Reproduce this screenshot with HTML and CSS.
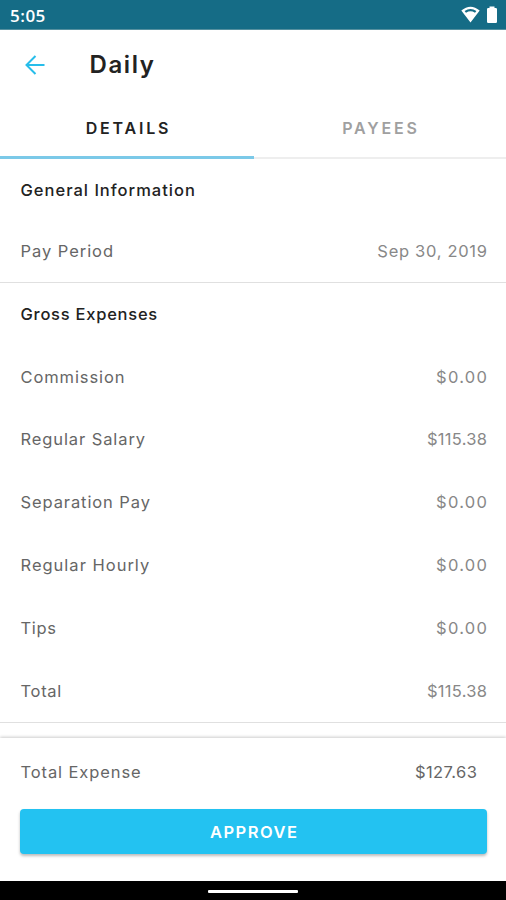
FILE: index.html
```html
<!DOCTYPE html>
<html lang="en">
<head>
<meta charset="utf-8">
<title>Daily</title>
<link rel="stylesheet" href="styles.css">
</head>
<body>
<div class="screen">
  <header class="status">
    <span class="clock">5:05</span>
    <svg class="status-icons" width="37" height="18" viewBox="0 0 37 18">
      <path fill="#fff" fill-rule="evenodd" d="M0.3 4.500Q9.500-3.200 18.700 4.500L9.500 16.500ZM3.600 5L5 6.700Q9.500 3.900 14 6.700L15.400 5Q9.500 1.100 3.600 5Z"/>
      <path fill="#fff" d="M28.500 0.500h5v1.500h1.300q1.200 0 1.200 1.200v12.600q0 1.200-1.200 1.200h-7.600q-1.200 0-1.200-1.200V3.200q0-1.200 1.200-1.200h1.300z"/>
    </svg>
  </header>
  <div class="appbar">
    <svg class="back" width="20" height="20" viewBox="0 0 20 20" fill="none" stroke="#27bdea" stroke-width="2"><path d="M19.500 10H1.800M10.500 1L1.500 10L10.500 19"/></svg>
    <h1 class="title">Daily</h1>
  </div>
  <nav class="tabs">
    <div class="tab active"><span class="t-details">DETAILS</span></div>
    <div class="tab"><span class="t-payees">PAYEES</span></div>
  </nav>
  <main class="content">
    <section class="group info">
      <h2 class="row"><span class="l-info">General Information</span></h2>
      <div class="row"><span class="l-period">Pay Period</span><span class="value v-date">Sep 30, 2019</span></div>
    </section>
    <section class="group gross">
      <h2 class="row"><span class="l-gross">Gross Expenses</span></h2>
      <div class="row"><span class="l-comm">Commission</span><span class="value v-zero">$0.00</span></div>
      <div class="row"><span class="l-salary">Regular Salary</span><span class="value v-115">$115.38</span></div>
      <div class="row"><span class="l-sep">Separation Pay</span><span class="value v-zero">$0.00</span></div>
      <div class="row"><span class="l-hourly">Regular Hourly</span><span class="value v-zero">$0.00</span></div>
      <div class="row"><span class="l-tips">Tips</span><span class="value v-zero">$0.00</span></div>
      <div class="row"><span class="l-total">Total</span><span class="value v-115">$115.38</span></div>
    </section>
  </main>
  <footer class="summary">
    <div class="sum-row"><span class="l-expense">Total Expense</span><span class="v-expense">$127.63</span></div>
    <button class="approve"><span class="l-approve">APPROVE</span></button>
  </footer>
  <div class="navbar"><div class="handle"></div></div>
</div>
</body>
</html>
```
FILE: styles.css
```css
* { box-sizing: border-box; }
body { margin: 0; font-family: Inter, "Liberation Sans", sans-serif; background: #fff; }
h1, h2 { margin: 0; }
span { white-space: nowrap; }
.screen { width: 506px; height: 900px; display: flex; flex-direction: column; overflow: hidden; background: #fff; }
.status { height: 30px; flex: none; background: #156c86; border-bottom: 1px solid #55909f; display: flex; justify-content: space-between; padding: 0 8px 0 10px; }
.clock { font: 600 17px/31px "Open Sans", sans-serif; color: #fff; letter-spacing: .5px; }
.status-icons { margin-top: 6px; }
.appbar { height: 69px; flex: none; display: flex; align-items: center; padding-left: 25px; }
.title { margin-left: 44.500px; font-size: 24px; line-height: 30px; font-weight: 600; color: #222; letter-spacing: 1.600px; }
.tabs { height: 60px; flex: none; display: flex; border-bottom: 2px solid #eee; }
.tab { width: 254px; height: 60px; padding-bottom: 2px; display: flex; justify-content: center; align-items: center; font-size: 16px; font-weight: 600; color: #a0a0a0; letter-spacing: 2.800px; }
.tab + .tab { width: 252px; }
.active { color: #222; border-bottom: 3px solid #7bc9e8; padding: 0 0 0 3px; }
.t-payees { padding-left: 2px; }
.content { flex: none; height: 579px; display: flex; flex-direction: column; }
.group { display: grid; border-bottom: 1px solid #e0e0e0; flex: none; }
.info { height: 124px; grid-template-rows: 61px 61px; }
.gross { height: 440px; padding-top: 0; grid-template-rows: repeat(7, 62.8px); }
.row { display: flex; align-items: center; justify-content: space-between; padding: 0 19px 0 20.500px; font-size: 16.500px; font-weight: 400; color: #666; }
h2.row { font-weight: 500; color: #222; }
.gross .row { padding-bottom: 1px; }
.gross h2.row { padding-bottom: 0; }
.value { color: #888; }
.l-info { letter-spacing: 1px; }
.l-period { letter-spacing: .95px; }
.l-gross { letter-spacing: .75px; }
.l-comm, .l-salary, .l-sep, .l-expense { letter-spacing: .9px; }
.l-hourly { letter-spacing: 1px; }
.l-tips, .l-total { letter-spacing: .7px; }
.v-date { letter-spacing: .7px; margin-right: -.7px; }
.v-zero { letter-spacing: 1.300px; margin-right: -1.300px; }
.v-115 { letter-spacing: .3px; margin-right: -.3px; }
.v-expense { letter-spacing: .45px; margin-right: -.45px; }
.l-approve { letter-spacing: 1.500px; margin-right: -1.500px; }
.summary { height: 143px; flex: none; background: #fff; box-shadow: 0 -1px 3px #ccc; padding: 12px 19px 0 20px; }
.sum-row { display: flex; justify-content: space-between; align-items: center; height: 43px; padding-right: 10px; font-size: 16.500px; color: #666; padding-left: .5px; }
.approve { display: flex; width: 100%; height: 45px; margin-top: 16px; align-items: center; justify-content: center; border: 0; border-radius: 4px; background: #23c2f1; box-shadow: 0 2px 3px #bbb; color: #fff; font: 600 16.500px Inter, sans-serif; }
.navbar { height: 19px; flex: none; background: #000; display: flex; justify-content: center; align-items: center; padding-bottom: 0; }
.handle { width: 90px; height: 3px; margin-top: 2px; background: #fff; border-radius: 1px; }
```
